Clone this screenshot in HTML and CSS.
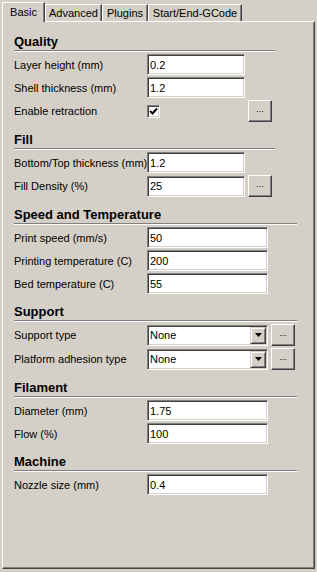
FILE: index.html
```html
<!DOCTYPE html>
<html>
  <head>
    <meta charset="utf-8">
    <title>Basic settings</title>
    <link rel="stylesheet" href="styles.css">
  </head>
  <body>
    <div class="tabs">
      <div class="tab active tab-basic">Basic</div>
      <div class="tab tab-advanced">Advanced</div>
      <div class="tab tab-plugins">Plugins</div>
      <div class="tab tab-gcode">Start/End-GCode</div>
    </div>
    <div class="panel">
      <div class="section narrow first">
        <h2>Quality</h2>
        <div class="row">
          <label>Layer height (mm)</label>
          <input type="text" class="field short" value="0.2">
        </div>
        <div class="row">
          <label>Shell thickness (mm)</label>
          <input type="text" class="field short" value="1.2">
        </div>
        <div class="row tall">
          <label>Enable retraction</label>
          <div class="short">
            <span class="check">
              <svg width="9" height="9" viewBox="0 0 9 9"><path d="M1 4 L3.5 6.5 L8 1.5" fill="none" stroke="#000" stroke-width="2"/></svg>
            </span>
          </div>
          <button class="more">...</button>
        </div>
      </div>

      <div class="section narrow">
        <h2>Fill</h2>
        <div class="row">
          <label>Bottom/Top thickness (mm)</label>
          <input type="text" class="field short" value="1.2">
        </div>
        <div class="row tall">
          <label>Fill Density (%)</label>
          <input type="text" class="field short" value="25">
          <button class="more">...</button>
        </div>
      </div>

      <div class="section">
        <h2>Speed and Temperature</h2>
        <div class="row">
          <label>Print speed (mm/s)</label>
          <input type="text" class="field long" value="50">
        </div>
        <div class="row">
          <label>Printing temperature (C)</label>
          <input type="text" class="field long" value="200">
        </div>
        <div class="row">
          <label>Bed temperature (C)</label>
          <input type="text" class="field long" value="55">
        </div>
      </div>

      <div class="section">
        <h2>Support</h2>
        <div class="row tall">
          <label>Support type</label>
          <div class="combo">
            <span class="combo-text">None</span>
            <span class="drop"><svg width="7" height="4" viewBox="0 0 7 4"><path d="M0 0 H7 L3.5 4 Z" fill="#000"/></svg></span>
          </div>
          <button class="more">...</button>
        </div>
        <div class="row tall">
          <label>Platform adhesion type</label>
          <div class="combo">
            <span class="combo-text">None</span>
            <span class="drop"><svg width="7" height="4" viewBox="0 0 7 4"><path d="M0 0 H7 L3.5 4 Z" fill="#000"/></svg></span>
          </div>
          <button class="more">...</button>
        </div>
      </div>

      <div class="section">
        <h2>Filament</h2>
        <div class="row">
          <label>Diameter (mm)</label>
          <input type="text" class="field long" value="1.75">
        </div>
        <div class="row">
          <label>Flow (%)</label>
          <input type="text" class="field long" value="100">
        </div>
      </div>

      <div class="section">
        <h2>Machine</h2>
        <div class="row">
          <label>Nozzle size (mm)</label>
          <input type="text" class="field long" value="0.4">
        </div>
      </div>
    </div>
  </body>
</html>
```

FILE: styles.css
```css
body {
  margin: 0;
  padding: 2px 2px 0 2px;
  background-color: #d4d0c8;
  font-family: "Liberation Sans", Tahoma, sans-serif;
  font-size: 11px;
  color: #000000;
}

.tabs {
  display: flex;
  align-items: flex-end;
  height: 19px;
}

.tab {
  box-sizing: border-box;
  height: 17px;
  padding-top: 2px;
  line-height: 13px;
  text-align: center;
  white-space: nowrap;
  border-top: 1px solid #ffffff;
  border-left: 1px solid #ffffff;
  border-right: 1px solid #404040;
  box-shadow: inset -1px 0 #808080;
  background-color: #d4d0c8;
}

.tab.active {
  position: relative;
  height: 20px;
  margin-bottom: -1px;
  padding-top: 3px;
}

.tab-basic { width: 43px; }
.tab-advanced { width: 57px; }
.tab-plugins { width: 46px; }
.tab-gcode { width: 94px; }

.panel {
  box-sizing: border-box;
  height: 548px;
  padding: 12px 0 0 11px;
  border-top: 1px solid #ffffff;
  border-left: 1px solid #ffffff;
  border-right: 1px solid #404040;
  border-bottom: 1px solid #404040;
  box-shadow: inset -1px -1px #808080;
}

.section {
  width: 283px;
  margin-top: 10px;
}

.section.narrow {
  width: 261px;
}

.section.first {
  margin-top: 0;
}

h2 {
  margin: 0 0 3px 0;
  font-size: 13px;
  font-weight: bold;
  line-height: 16px;
  border-bottom: 1px solid #808080;
  box-shadow: 0 1px #ffffff;
}

.row {
  display: flex;
  align-items: center;
  height: 21px;
  margin-top: 2px;
}

.row.tall {
  height: 22px;
}

.row label {
  width: 133px;
  flex-shrink: 0;
  white-space: nowrap;
}

.short {
  width: 98px;
}

.long {
  width: 121px;
}

.field {
  box-sizing: border-box;
  height: 21px;
  margin: 0;
  padding: 0 1px 0 2px;
  border: 1px solid;
  border-color: #808080 #ffffff #ffffff #808080;
  box-shadow: inset 1px 1px #404040, inset -1px -1px #d4d0c8;
  background-color: #ffffff;
  font-family: "Liberation Sans", Tahoma, sans-serif;
  font-size: 11px;
  color: #000000;
  outline: none;
}

.check {
  box-sizing: border-box;
  display: flex;
  align-items: center;
  justify-content: center;
  width: 13px;
  height: 13px;
  border: 1px solid;
  border-color: #808080 #ffffff #ffffff #808080;
  box-shadow: inset 1px 1px #404040, inset -1px -1px #d4d0c8;
  background-color: #ffffff;
}

.more {
  box-sizing: border-box;
  width: 24px;
  height: 22px;
  margin-left: 3px;
  padding: 0 0 4px 0;
  border: 1px solid;
  border-color: #ffffff #404040 #404040 #ffffff;
  box-shadow: inset -1px -1px #808080;
  background-color: #d4d0c8;
  font-family: "Liberation Sans", Tahoma, sans-serif;
  font-size: 9px;
  color: #000000;
}

.combo {
  box-sizing: border-box;
  display: flex;
  align-items: center;
  width: 121px;
  height: 21px;
  border: 1px solid;
  border-color: #808080 #ffffff #ffffff #808080;
  box-shadow: inset 1px 1px #404040, inset -1px -1px #d4d0c8;
  background-color: #ffffff;
}

.combo-text {
  flex: 1;
  padding-left: 2px;
}

.drop {
  box-sizing: border-box;
  display: flex;
  align-items: center;
  justify-content: center;
  width: 16px;
  height: 17px;
  margin-right: 1px;
  border: 1px solid;
  border-color: #d4d0c8 #404040 #404040 #d4d0c8;
  box-shadow: inset 1px 1px #ffffff, inset -1px -1px #808080;
  background-color: #d4d0c8;
}
```
